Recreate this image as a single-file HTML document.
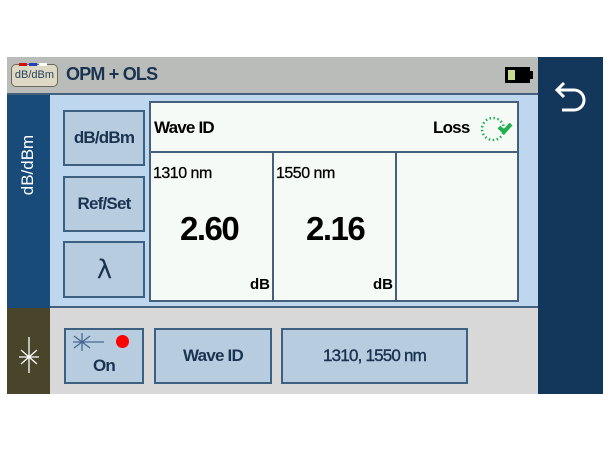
<!DOCTYPE html>
<html><head><style>
*{margin:0;padding:0;box-sizing:border-box}
body{width:610px;height:450px;background:#fff;position:relative;overflow:hidden;font-family:"Liberation Sans",sans-serif}
.a{position:absolute}
.btn{position:absolute;background:#b8cce0;border:2px solid #3d5f80;color:#1a3350;font-weight:bold;display:flex;align-items:center;justify-content:center;font-size:17px;letter-spacing:-0.8px}
.t{position:absolute;color:#000;font-weight:bold}
</style></head><body>
<div class="a" style="left:7px;top:57px;width:531px;height:38px;background:#b9bcb8;border-bottom:2px solid #44607c"></div>
<div class="a" style="left:11px;top:64px;width:47px;height:23px;border:1.5px solid #6a6a5a;border-radius:5px;background:#ded9c4;font-size:11px;color:#27405e;text-align:center;line-height:21px">dB/dBm</div>
<div class="a" style="left:19px;top:63px;width:8px;height:3px;background:#d01010"></div>
<div class="a" style="left:29px;top:63px;width:8px;height:3px;background:#2040c0"></div>
<div class="a" style="left:39px;top:63px;width:8px;height:3px;background:#fff"></div>
<div class="a" style="left:66px;top:64px;font-size:18px;color:#1a3350;font-weight:bold;letter-spacing:-0.8px">OPM + OLS</div>
<div class="a" style="left:505px;top:67px;width:25px;height:16px;background:#000"></div>
<div class="a" style="left:530px;top:71px;width:3px;height:8px;background:#000"></div>
<div class="a" style="left:508px;top:70px;width:7px;height:10px;background:#c8dc90"></div>
<div class="a" style="left:538px;top:57px;width:65px;height:337px;background:#13375a"></div>
<svg class="a" style="left:552px;top:82px" width="36" height="34" viewBox="0 0 36 34"><path d="M6 8 H22 A9 9 0 0 1 22 28 H10" fill="none" stroke="#fff" stroke-width="3"/><path d="M12 1 L5 8 L12 15" fill="none" stroke="#fff" stroke-width="3"/></svg>
<div class="a" style="left:7px;top:95px;width:43px;height:213px;background:#184a7a"></div>
<div class="a" style="left:18px;top:210px;transform:rotate(-90deg);transform-origin:0 0;font-size:17px;color:#fff;width:90px;text-align:center">dB/dBm</div>
<div class="a" style="left:50px;top:95px;width:488px;height:213px;background:#bed6ee;border-bottom:2px solid #44607c"></div>
<div class="btn" style="left:63px;top:110px;width:82px;height:56px">dB/dBm</div>
<div class="btn" style="left:63px;top:176px;width:82px;height:56px">Ref/Set</div>
<div class="btn" style="left:63px;top:241px;width:82px;height:57px;font-size:26px;font-weight:normal;font-family:'DejaVu Sans',sans-serif">λ</div>
<div class="a" style="left:149px;top:101px;width:370px;height:201px;background:#f5faf6;border:2px solid #44607c"></div>
<div class="a" style="left:149px;top:151px;width:370px;height:2px;background:#44607c"></div>
<div class="a" style="left:272px;top:152px;width:2px;height:149px;background:#44607c"></div>
<div class="a" style="left:395px;top:152px;width:2px;height:149px;background:#44607c"></div>
<div class="t" style="left:154px;top:118px;font-size:17px;letter-spacing:-0.8px">Wave ID</div>
<div class="t" style="left:433px;top:118px;font-size:17px;letter-spacing:-0.8px">Loss</div>
<svg class="a" style="left:478px;top:112px" width="36" height="34" viewBox="0 0 36 34"><circle cx="15" cy="17" r="11" fill="none" stroke="#20b050" stroke-width="2.5" stroke-dasharray="1.5 2.5"/><path d="M21 15 L26 20 L33 12" fill="none" stroke="#20b050" stroke-width="4"/></svg>
<div class="t" style="left:153px;top:165px;font-size:16px;font-weight:normal;-webkit-text-stroke:0.3px #000;letter-spacing:-0.5px">1310 nm</div>
<div class="t" style="left:276px;top:165px;font-size:16px;font-weight:normal;-webkit-text-stroke:0.3px #000;letter-spacing:-0.5px">1550 nm</div>
<div class="t" style="left:180px;top:210px;font-size:33px;letter-spacing:-1.5px">2.60</div>
<div class="t" style="left:306px;top:210px;font-size:33px;letter-spacing:-1.5px">2.16</div>
<div class="t" style="left:250px;top:276px;font-size:15px">dB</div>
<div class="t" style="left:373px;top:276px;font-size:15px">dB</div>
<div class="a" style="left:7px;top:308px;width:43px;height:86px;background:#48452a"></div>
<div class="a" style="left:50px;top:308px;width:488px;height:86px;background:#d8d8d8"></div>
<svg class="a" style="left:16px;top:337px" width="26" height="36" viewBox="0 0 26 36"><path d="M13 0 V36 M5 13 L21 27 M21 13 L5 27 M3 20 H23" stroke="#fff" stroke-width="1.3"/></svg>
<div class="btn" style="left:64px;top:328px;width:80px;height:56px;align-items:flex-end;padding-bottom:6px">On</div>
<svg class="a" style="left:72px;top:332px" width="40" height="20" viewBox="0 0 40 20"><path d="M10 1 V19 M2 4 L18 16 M18 4 L2 16 M1 10 H32" stroke="#4a6a90" stroke-width="1.3"/></svg>
<div class="a" style="left:116px;top:335px;width:13px;height:13px;border-radius:50%;background:#f00"></div>
<div class="btn" style="left:154px;top:328px;width:118px;height:56px">Wave ID</div>
<div class="btn" style="left:281px;top:328px;width:187px;height:56px;font-weight:normal;-webkit-text-stroke:0.4px #1a3350">1310, 1550 nm</div>
</body></html>
